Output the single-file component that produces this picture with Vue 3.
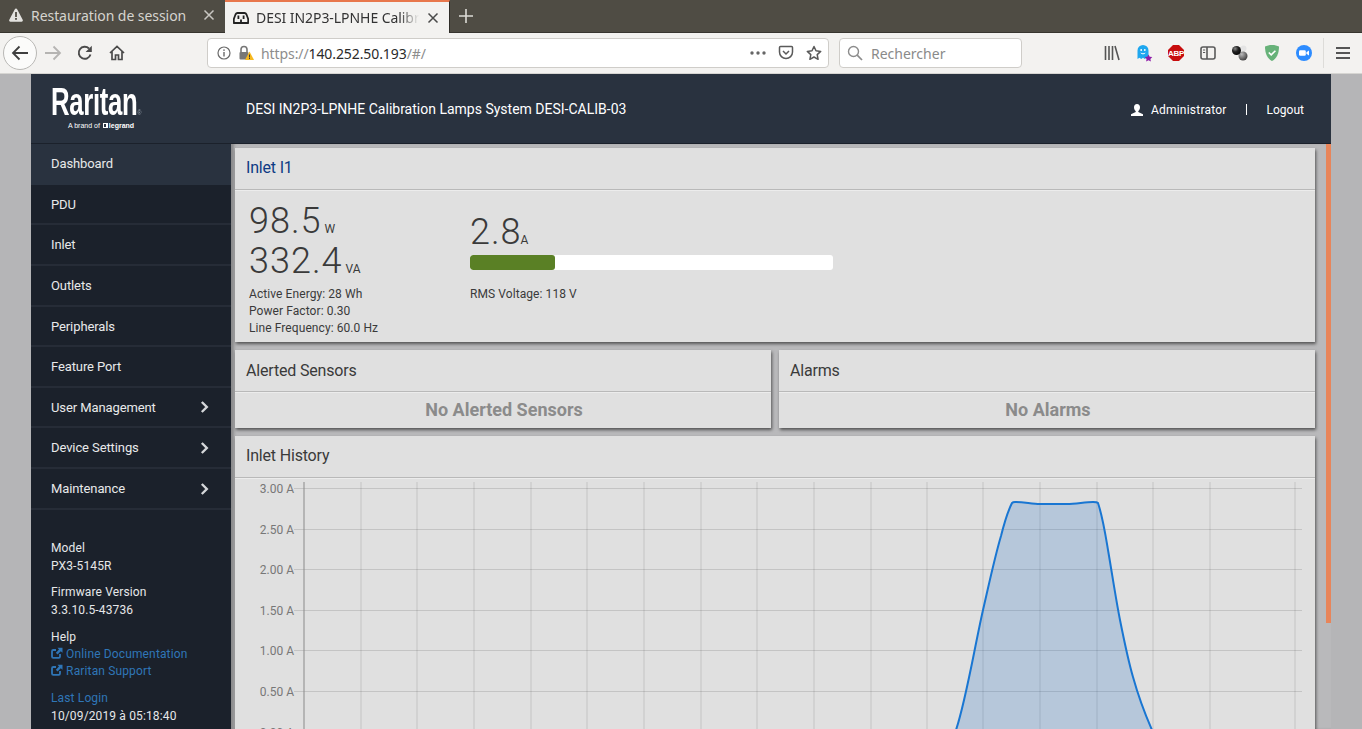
<template>
  <div class="window">
    <div class="tabbar">
      <div class="tab">
        <svg class="fav" width="16" height="16" viewBox="0 0 16 16"><path d="M8 1.500c.6 0 1 .3 1.300.9l5.400 10.400c.5 1-.1 1.900-1.100 1.900H2.400c-1 0-1.600-.9-1.100-1.900L6.700 2.400C7 1.800 7.400 1.500 8 1.500z" fill="#e3e2df"/><rect x="7.100" y="5" width="1.800" height="5" fill="#4f4c44"/><rect x="7.100" y="11" width="1.800" height="1.800" fill="#4f4c44"/></svg>
        <span class="tab-title">Restauration de session</span>
        <svg class="tab-x" width="12" height="12" viewBox="0 0 12 12"><path d="M1.500 1.500l9 9M10.500 1.500l-9 9" stroke="#c9c7c2" stroke-width="1.500"/></svg>
      </div>
      <div class="tab active">
        <svg class="fav" width="16" height="16" viewBox="0 0 16 16"><path d="M4.500 3h7c1 0 1.500.5 2 1.500l1.500 4c.3 1 .3 2.500 0 4.500H1c-.3-2-.3-3.500 0-4.500l1.500-4C3 3.500 3.500 3 4.500 3z" fill="none" stroke="#222" stroke-width="1.800"/><rect x="4.500" y="5.500" width="1.800" height="3.500" fill="#222"/><rect x="9.700" y="5.500" width="1.800" height="3.500" fill="#222"/><rect x="7.100" y="9.500" width="1.800" height="3" fill="#222"/></svg>
        <span class="tab-title fade">DESI IN2P3-LPNHE Calibration Lamps System</span>
        <svg class="tab-x" width="12" height="12" viewBox="0 0 12 12"><path d="M1.500 1.500l9 9M10.500 1.500l-9 9" stroke="#4a4a4a" stroke-width="1.500"/></svg>
      </div>
      <svg class="plus" width="14" height="14" viewBox="0 0 14 14"><path d="M7 0v14M0 7h14" stroke="#dddbd6" stroke-width="1.600"/></svg>
    </div>

    <div class="toolbar">
      <div class="back">
        <svg width="18" height="16" viewBox="0 0 18 16"><path d="M17 8H2M8.500 1.500L2 8l6.500 6.500" fill="none" stroke="#3f3f3f" stroke-width="1.800"/></svg>
      </div>
      <svg class="tool fwd" width="18" height="16" viewBox="0 0 18 16"><path d="M1 8h15M9.500 1.500L16 8l-6.500 6.500" fill="none" stroke="#b5b4b2" stroke-width="1.800"/></svg>
      <svg class="tool reload" width="16" height="16" viewBox="0 0 16 16"><path d="M13.500 9.500A6 6 0 1 1 12 3.500" fill="none" stroke="#4a4a4a" stroke-width="1.900"/><path d="M14.800.8v6.200H8.600z" fill="#4a4a4a"/></svg>
      <svg class="tool home" width="16" height="16" viewBox="0 0 16 16"><path d="M1 8l7-6.500L15 8M3 6.500V14.500h3.500V10h3v4.500H13V6.500" fill="none" stroke="#4a4a4a" stroke-width="1.700"/></svg>

      <div class="urlbar">
        <svg class="info" width="14" height="14" viewBox="0 0 14 14"><circle cx="7" cy="7" r="6" fill="none" stroke="#6a6a6a" stroke-width="1.200"/><rect x="6.300" y="6" width="1.400" height="4.500" fill="#6a6a6a"/><rect x="6.300" y="3.400" width="1.400" height="1.500" fill="#6a6a6a"/></svg>
        <svg class="lock" width="16" height="16" viewBox="0 0 16 16"><path d="M3 7V4.500a3 3 0 0 1 6 0V7" fill="none" stroke="#777" stroke-width="1.600"/><rect x="1.500" y="7" width="9" height="7.500" rx="1" fill="#777"/><path d="M11.500 6.500L16 15H7z" fill="#f6b81f"/><rect x="11" y="9.500" width="1" height="3" fill="#3a3a3a"/><rect x="11" y="13" width="1" height="1" fill="#3a3a3a"/></svg>
        <span class="url"><span class="dim">https://</span>140.252.50.193<span class="dim">/#/</span></span>
        <svg class="dots" width="16" height="4" viewBox="0 0 16 4"><circle cx="2" cy="2" r="1.700" fill="#666"/><circle cx="8" cy="2" r="1.700" fill="#666"/><circle cx="14" cy="2" r="1.700" fill="#666"/></svg>
        <svg class="pocket" width="16" height="16" viewBox="0 0 16 16"><path d="M2.500 1.500h11c.6 0 1 .4 1 1V7a6.500 6.500 0 0 1-13 0V2.500c0-.6.4-1 1-1z" fill="none" stroke="#5a5a5a" stroke-width="1.500"/><path d="M5 6l3 3 3-3" fill="none" stroke="#5a5a5a" stroke-width="1.500"/></svg>
        <svg class="star" width="16" height="16" viewBox="0 0 16 16"><path d="M8 1.500l2 4.300 4.700.6-3.500 3.200.9 4.700L8 12l-4.100 2.300.9-4.700L1.300 6.400 6 5.800z" fill="none" stroke="#5a5a5a" stroke-width="1.500" stroke-linejoin="round"/></svg>
      </div>

      <div class="searchbar">
        <svg width="16" height="16" viewBox="0 0 16 16"><circle cx="6.500" cy="6.500" r="5" fill="none" stroke="#8c8c8c" stroke-width="1.400"/><path d="M10.200 10.200l4.800 4.800" stroke="#8c8c8c" stroke-width="1.700"/></svg>
        <span>Rechercher</span>
      </div>

      <div class="extensions">
        <div class="ext"><svg width="16" height="16" viewBox="0 0 16 16"><path d="M1.500 1v14M5 1v14M8.500 1v14M11 1l4 14" stroke="#555" stroke-width="1.600" fill="none"/></svg></div>
        <div class="ext"><svg width="17" height="18" viewBox="0 0 17 18"><path d="M1.500 15V6.500a5.500 5.500 0 0 1 11 0V15l-1.900-1.300L8.700 15l-1.700-1.300L5.300 15l-1.900-1.300z" fill="#1ea7ef"/><circle cx="5.200" cy="6" r=".9" fill="#fff"/><circle cx="8.800" cy="6" r=".9" fill="#fff"/><path d="M4.800 9c1 1.100 3.400 1.100 4.400 0" stroke="#fff" fill="none"/><path d="M12.500 10.500l1.200 2.300 2.600.3-1.900 1.800.5 2.600-2.400-1.300-2.400 1.300.5-2.600-1.900-1.800 2.600-.3z" fill="#8e1aa8"/></svg></div>
        <div class="ext"><svg width="16" height="16" viewBox="0 0 16 16"><path d="M5 0h6l5 5v6l-5 5H5l-5-5V5z" fill="#c70d0d"/><text x="8" y="11" text-anchor="middle" class="abp">ABP</text></svg></div>
        <div class="ext"><svg width="16" height="16" viewBox="0 0 16 16"><rect x="1" y="2" width="14" height="12" rx="2" fill="none" stroke="#5a5a5a" stroke-width="1.600"/><path d="M7 2v12" stroke="#5a5a5a" stroke-width="1.600"/><path d="M3 5h2.200M3 7.500h2.200" stroke="#5a5a5a" stroke-width="1.200"/></svg></div>
        <div class="ext"><svg width="18" height="18" viewBox="0 0 18 18"><defs><radialGradient id="ball" cx="35%" cy="30%" r="70%"><stop offset="0" stop-color="#888"/><stop offset=".5" stop-color="#222"/><stop offset="1" stop-color="#0a0a0a"/></radialGradient><radialGradient id="ball2" cx="35%" cy="30%" r="70%"><stop offset="0" stop-color="#bbb"/><stop offset="1" stop-color="#444"/></radialGradient></defs><circle cx="12.500" cy="4.500" r="3" fill="#e4e4e4"/><circle cx="12" cy="12" r="4.500" fill="url(#ball2)"/><circle cx="5.500" cy="6.500" r="4.500" fill="url(#ball)"/></svg></div>
        <div class="ext"><svg width="16" height="18" viewBox="0 0 16 18"><path d="M8 1c3 0 5 .7 7 1.500C15 9 13 14.500 8 17 3 14.500 1 9 1 2.500 3 1.700 5 1 8 1z" fill="#67b279"/><path d="M4.800 8.500l2.400 2.400 4.200-4.200" fill="none" stroke="#fff" stroke-width="1.600"/></svg></div>
        <div class="ext"><svg width="16" height="16" viewBox="0 0 16 16"><circle cx="8" cy="8" r="8" fill="#2d8cff"/><rect x="3" y="5.200" width="6.800" height="5.600" rx="1.300" fill="#fff"/><path d="M10.400 7.300L13 5.500v5l-2.600-1.800z" fill="#fff"/></svg></div>
        <div class="sep"></div>
        <svg class="menu" width="14" height="12" viewBox="0 0 14 12"><path d="M0 1h14M0 6h14M0 11h14" stroke="#555" stroke-width="1.800"/></svg>
      </div>
    </div>

    <div class="page">
      <header class="head">
        <div class="logo">
          <div class="logo-name">Raritan<sup>®</sup></div>
          <div class="logo-sub">A brand of <i class="mark"></i><b>legrand</b></div>
        </div>
        <div class="system">DESI IN2P3-LPNHE Calibration Lamps System DESI-CALIB-03</div>
        <div class="user">
          <svg width="12" height="12" viewBox="0 0 12 12"><path d="M6 0c1.900 0 3 1.300 3 3.200C9 5 8.200 6.300 7.300 7v1L12 10.300V12H0v-1.700L4.700 8V7C3.800 6.300 3 5 3 3.200 3 1.300 4.100 0 6 0z" fill="#fff"/></svg>
          <span class="user-name">Administrator</span>
          <i class="bar"></i>
          <span>Logout</span>
        </div>
      </header>

      <div class="body">
        <aside class="side">
          <nav>
            <div v-for="(item, i) in nav" :key="item.label" class="nav-item" :class="{ current: i === 0 }">
              <span>{{ item.label }}</span>
              <svg v-if="item.more" width="9" height="12" viewBox="0 0 9 12"><path d="M1.800 1l5 5-5 5" fill="none" stroke="#d5d7da" stroke-width="2.400"/></svg>
            </div>
          </nav>
          <div class="info-block">
            <div class="info-group">
              <div>Model</div>
              <div>PX3-5145R</div>
            </div>
            <div class="info-group">
              <div>Firmware Version</div>
              <div>3.3.10.5-43736</div>
            </div>
            <div class="info-group">
              <div>Help</div>
              <div v-for="link in links" :key="link" class="link">
                <svg width="12" height="12" viewBox="0 0 12 12"><path d="M9 7v2.500c0 .8-.5 1.300-1.300 1.300H2.300C1.500 10.800 1 10.300 1 9.500V4.300C1 3.500 1.500 3 2.300 3H5" fill="none" stroke="#2f76b7" stroke-width="1.800"/><path d="M6.500.8H11.500V5.800L9.800 4.200 6.500 7.500 4.800 5.800 8 2.500z" fill="#2f76b7"/></svg>
                {{ link }}
              </div>
            </div>
            <div class="info-group last">
              <div class="link">Last Login</div>
              <div>10/09/2019 à 05:18:40</div>
            </div>
          </div>
        </aside>

        <main class="main">
          <div class="content">
            <section class="panel">
              <h2 class="panel-title blue">Inlet I1</h2>
              <div class="inlet">
                <div class="inlet-left">
                  <div class="big">98.5<small>W</small></div>
                  <div class="big">332.4<small>VA</small></div>
                  <div class="facts">
                    <div>Active Energy: 28 Wh</div>
                    <div>Power Factor: 0.30</div>
                    <div>Line Frequency: 60.0 Hz</div>
                  </div>
                </div>
                <div class="inlet-right">
                  <div class="big tight">2.8<small>A</small></div>
                  <div class="meter"><div class="meter-fill" :style="{ width: meter + '%' }"></div></div>
                  <div class="facts">RMS Voltage: 118 V</div>
                </div>
              </div>
            </section>

            <div class="pair">
              <section class="panel">
                <h2 class="panel-title">Alerted Sensors</h2>
                <div class="empty">No Alerted Sensors</div>
              </section>
              <section class="panel">
                <h2 class="panel-title">Alarms</h2>
                <div class="empty">No Alarms</div>
              </section>
            </div>

            <section class="panel history">
              <h2 class="panel-title">Inlet History</h2>
              <svg class="chart" width="1080" height="260" viewBox="0 0 1080 260">
                <line v-for="x in xLines" :key="x" :x1="x" :x2="x" y1="4" y2="260" class="grid" />
                <g v-for="row in yLines" :key="row.label">
                  <line x1="59" x2="1067" :y1="row.y" :y2="row.y" class="grid" />
                  <text x="59" :y="row.y + 4" text-anchor="end" class="tick">{{ row.label }}</text>
                </g>
                <line x1="69" x2="69" y1="4" y2="260" class="axis" />
                <path :d="curve + ' Z'" fill="#1f6fc4" fill-opacity="0.22" />
                <path :d="curve" fill="none" stroke="#1976d2" stroke-width="2" />
              </svg>
            </section>
          </div>
          <div class="scroll"></div>
        </main>
      </div>
    </div>
  </div>
</template>

<script setup>
const nav = [
  { label: "Dashboard" },
  { label: "PDU" },
  { label: "Inlet" },
  { label: "Outlets" },
  { label: "Peripherals" },
  { label: "Feature Port" },
  { label: "User Management", more: true },
  { label: "Device Settings", more: true },
  { label: "Maintenance", more: true }
]
const links = ["Online Documentation", "Raritan Support"]
const meter = 23.4

// page x of a column line minus the panel's left edge (235)
const xLines = [361, 417, 474, 531, 587, 644, 701, 757, 814, 871, 927, 983, 1040, 1097, 1153, 1210, 1295].map(x => x - 235)
const yLines = [
  { label: "3.00 A", y: 10.5 },
  { label: "2.50 A", y: 51.5 },
  { label: "2.00 A", y: 91.5 },
  { label: "1.50 A", y: 132.5 },
  { label: "1.00 A", y: 172.5 },
  { label: "0.50 A", y: 213.5 },
  { label: "0.00 A", y: 254.5 }
]
const curve = "M721 252 C731 222 739 172 748 132 C754 106 760 78 766 58 C769 46 773 33 777 25 Q778 24 780 24 C789 24 797 26 805 26 L832 26 C841 26 850 24 858 24 Q862 24 863 25 C868 40 871 60 873 72 C877 95 881 122 885 142 C889 162 893 182 898 199 C903 217 910 236 917 252"
</script>

<style>
body {
  overflow: hidden;
}
</style>

<style scoped>
.window {
  width: 1362px;
  height: 729px;
  overflow: hidden;
  display: flex;
  flex-direction: column;
  font-family: Roboto, sans-serif;
  background: #b5b5b7;
}

.tabbar {
  height: 33px;
  flex: none;
  display: flex;
  align-items: center;
  background: #4f4c44;
  border-bottom: 1px solid #37352f;
  box-sizing: border-box;
  font-family: "Noto Sans", sans-serif;
  font-size: 14px;
  letter-spacing: -0.06px;
}

.tab {
  width: 225px;
  height: 32px;
  flex: none;
  display: flex;
  align-items: center;
  padding: 0 10px 2px 8px;
  box-sizing: border-box;
  color: #d6d4cf;
}

.tab.active {
  height: 33px;
  margin-top: 1px;
  padding-bottom: 0;
  background: #f3f2f0;
  color: #333;
  border-top: 2px solid #e8774c;
  border-right: 1px solid #2f2d28;
}

.tab-title {
  flex: 1;
  margin-left: 7px;
  white-space: nowrap;
  overflow: hidden;
}

.fade {
  -webkit-mask-image: linear-gradient(to right, #000 88%, transparent);
  mask-image: linear-gradient(to right, #000 88%, transparent);
}

.tab-x {
  margin-left: 8px;
  flex: none;
}

.plus {
  margin-left: 9px;
}

.toolbar {
  height: 41px;
  flex: none;
  display: flex;
  align-items: center;
  background: #f3f2f0;
  border-bottom: 1px solid #d6d5d2;
  box-sizing: border-box;
}

.back {
  width: 34px;
  height: 34px;
  margin-left: 3px;
  border-radius: 50%;
  background: #fbfbfa;
  border: 1px solid #b9b8b5;
  box-sizing: border-box;
  display: flex;
  align-items: center;
  justify-content: center;
}

.tool {
  flex: none;
}

.fwd {
  margin-left: 7px;
}

.reload {
  margin-left: 15px;
}

.home {
  margin-left: 16px;
}

.urlbar,
.searchbar {
  height: 30px;
  box-sizing: border-box;
  display: flex;
  align-items: center;
  background: #fff;
  border: 1px solid #cfcdc9;
  border-radius: 4px;
  font-family: "Noto Sans", sans-serif;
  font-size: 14px;
}

.urlbar {
  width: 622px;
  margin-left: 82px;
  padding: 0 6px 0 9px;
}

.lock {
  margin-left: 7px;
}

.url {
  flex: 1;
  margin-left: 7px;
  color: #2a2a2a;
  letter-spacing: -0.09px;
}

.dim {
  color: #8d8d8d;
}

.pocket {
  margin-left: 12px;
}

.star {
  margin-left: 12px;
}

.searchbar {
  width: 183px;
  margin-left: 10px;
  padding-left: 7px;
  color: #8a8a8a;
}

.searchbar span {
  margin-left: 8px;
}

.extensions {
  display: flex;
  align-items: center;
  margin-left: 74px;
}

.ext {
  width: 32px;
  height: 32px;
  display: flex;
  align-items: center;
  justify-content: center;
}

.abp {
  font-family: "Liberation Sans", sans-serif;
  font-size: 8px;
  font-weight: 700;
  letter-spacing: -0.3px;
  fill: #fff;
}

.sep {
  width: 1px;
  height: 30px;
  background: #dddcd9;
  margin-left: 3px;
}

.menu {
  margin-left: 12px;
}

.page {
  width: 1300px;
  margin-left: 31px;
  flex: 1;
  display: flex;
  flex-direction: column;
  min-height: 0;
}

.head {
  height: 70px;
  flex: none;
  display: flex;
  align-items: center;
  background: #29323f;
  border-bottom: 1px solid #1b212b;
  box-sizing: border-box;
  color: #fff;
}

.logo {
  width: 215px;
  flex: none;
  padding-left: 20px;
  box-sizing: border-box;
  font-family: "Liberation Sans", sans-serif;
}

.logo-name {
  font-size: 39px;
  line-height: 32px;
  font-weight: 700;
  letter-spacing: -0.500px;
  transform: scaleX(0.66);
  transform-origin: left center;
  white-space: nowrap;
  margin-top: -2px;
}

.logo-name sup {
  font-size: 8px;
  font-weight: 400;
  line-height: 0;
  vertical-align: baseline;
  color: #9aa3ad;
}

.logo-sub {
  margin: 3px 0 0 17px;
  font-size: 7px;
  line-height: 9px;
  white-space: nowrap;
}

.mark {
  display: inline-block;
  width: 5px;
  height: 5px;
  margin: 0 1px 0 1px;
  border: 1px solid #fff;
  box-sizing: border-box;
  border-right-width: 2px;
}

.system {
  flex: 1;
  font-size: 14px;
}

.user {
  display: flex;
  align-items: center;
  font-size: 12px;
  padding: 2px 27px 0 0;
}

.user-name {
  margin-left: 8px;
  letter-spacing: 0.22px;
}

.bar {
  width: 1px;
  height: 11px;
  background: #fff;
  margin: 0 20px 0 19px;
}

.body {
  flex: 1;
  display: flex;
  min-height: 0;
}

.side {
  width: 200px;
  flex: none;
  background: #1b212b;
  color: #fff;
  font-size: 12px;
}

.nav-item {
  height: 40.630px;
  box-sizing: border-box;
  display: flex;
  align-items: center;
  justify-content: space-between;
  padding: 0.6px 22px 0 20px;
  font-size: 13px;
  letter-spacing: -0.1px;
  color: #e8e9ea;
  border-bottom: 2px solid #262c37;
}

.nav-item.current {
  background: #29323f;
  border-bottom-color: #29323f;
}

.info-block {
  padding: 29px 0 0 20px;
  letter-spacing: 0.14px;
}

.info-group {
  line-height: 18px;
  margin-bottom: 8.500px;
  color: #e6e7e9;
}

.info-group.last {
  padding-top: 0.6px;
}

.link {
  color: #2f76b7;
  line-height: 17.500px;
}

.link svg {
  vertical-align: -1px;
}

.main {
  flex: 1;
  display: flex;
  align-items: flex-start;
  background: #b9b9bb;
  box-shadow: inset 4px 0 3px -1px rgba(0, 0, 0, 0.25);
}

.content {
  width: 1080px;
  margin: 4px 11px 0 4px;
  flex: none;
  display: flex;
  flex-direction: column;
  gap: 8px;
}

.scroll {
  width: 5px;
  height: 479px;
  background: #e8855a;
}

.panel {
  background: #e0e0e0;
  box-shadow: 1px 2px 3px rgba(0, 0, 0, 0.55);
  color: #3a3a3a;
}

.panel-title {
  margin: 0;
  height: 42px;
  box-sizing: border-box;
  padding: 0 11px 1px;
  display: flex;
  align-items: center;
  font-size: 16px;
  font-weight: 400;
  letter-spacing: -0.18px;
  border-bottom: 1px solid #b9b9b9;
  box-shadow: 0 1px 0 #ececec;
}

.blue,
.history .panel-title {
  padding-bottom: 3px;
}

.blue {
  color: #0d3a84;
}

.inlet {
  height: 152px;
  display: flex;
  padding: 11px 14px 0;
  box-sizing: border-box;
  font-size: 12px;
}

.inlet-left {
  width: 221px;
  flex: none;
}

.inlet-right {
  width: 363px;
  padding-top: 11px;
}

.big {
  font-size: 36px;
  line-height: 40px;
  font-weight: 300;
  letter-spacing: 1px;
  white-space: nowrap;
}

.big small {
  margin-left: 3px;
  font-size: 12px;
  line-height: 0;
  font-weight: 400;
  letter-spacing: 0;
}

.tight small {
  margin-left: -1px;
}

.facts {
  margin-top: 4.500px;
  line-height: 17px;
  letter-spacing: 0.08px;
}

.meter {
  height: 15px;
  margin-top: 3px;
  background: #fff;
  border-radius: 3px;
  overflow: hidden;
}

.meter-fill {
  height: 100%;
  background: #5a8025;
  border-radius: 3px;
}

.inlet-right .facts {
  margin-top: 15.500px;
}

.pair {
  display: flex;
  gap: 8px;
}

.pair .panel {
  flex: 1;
}

.empty {
  height: 36px;
  display: flex;
  align-items: center;
  justify-content: center;
  padding: 0 0 2px 2px;
  box-sizing: border-box;
  font-size: 18px;
  font-weight: 700;
  color: #8b8b8b;
}

.history {
  height: 320px;
}

.chart {
  display: block;
}

.grid {
  stroke: #000;
  stroke-opacity: 0.12;
  stroke-width: 1;
}

.axis {
  stroke: #8a8a8a;
  stroke-width: 1;
}

.tick {
  font-size: 12px;
  fill: #777;
  font-family: Roboto, sans-serif;
}
</style>
